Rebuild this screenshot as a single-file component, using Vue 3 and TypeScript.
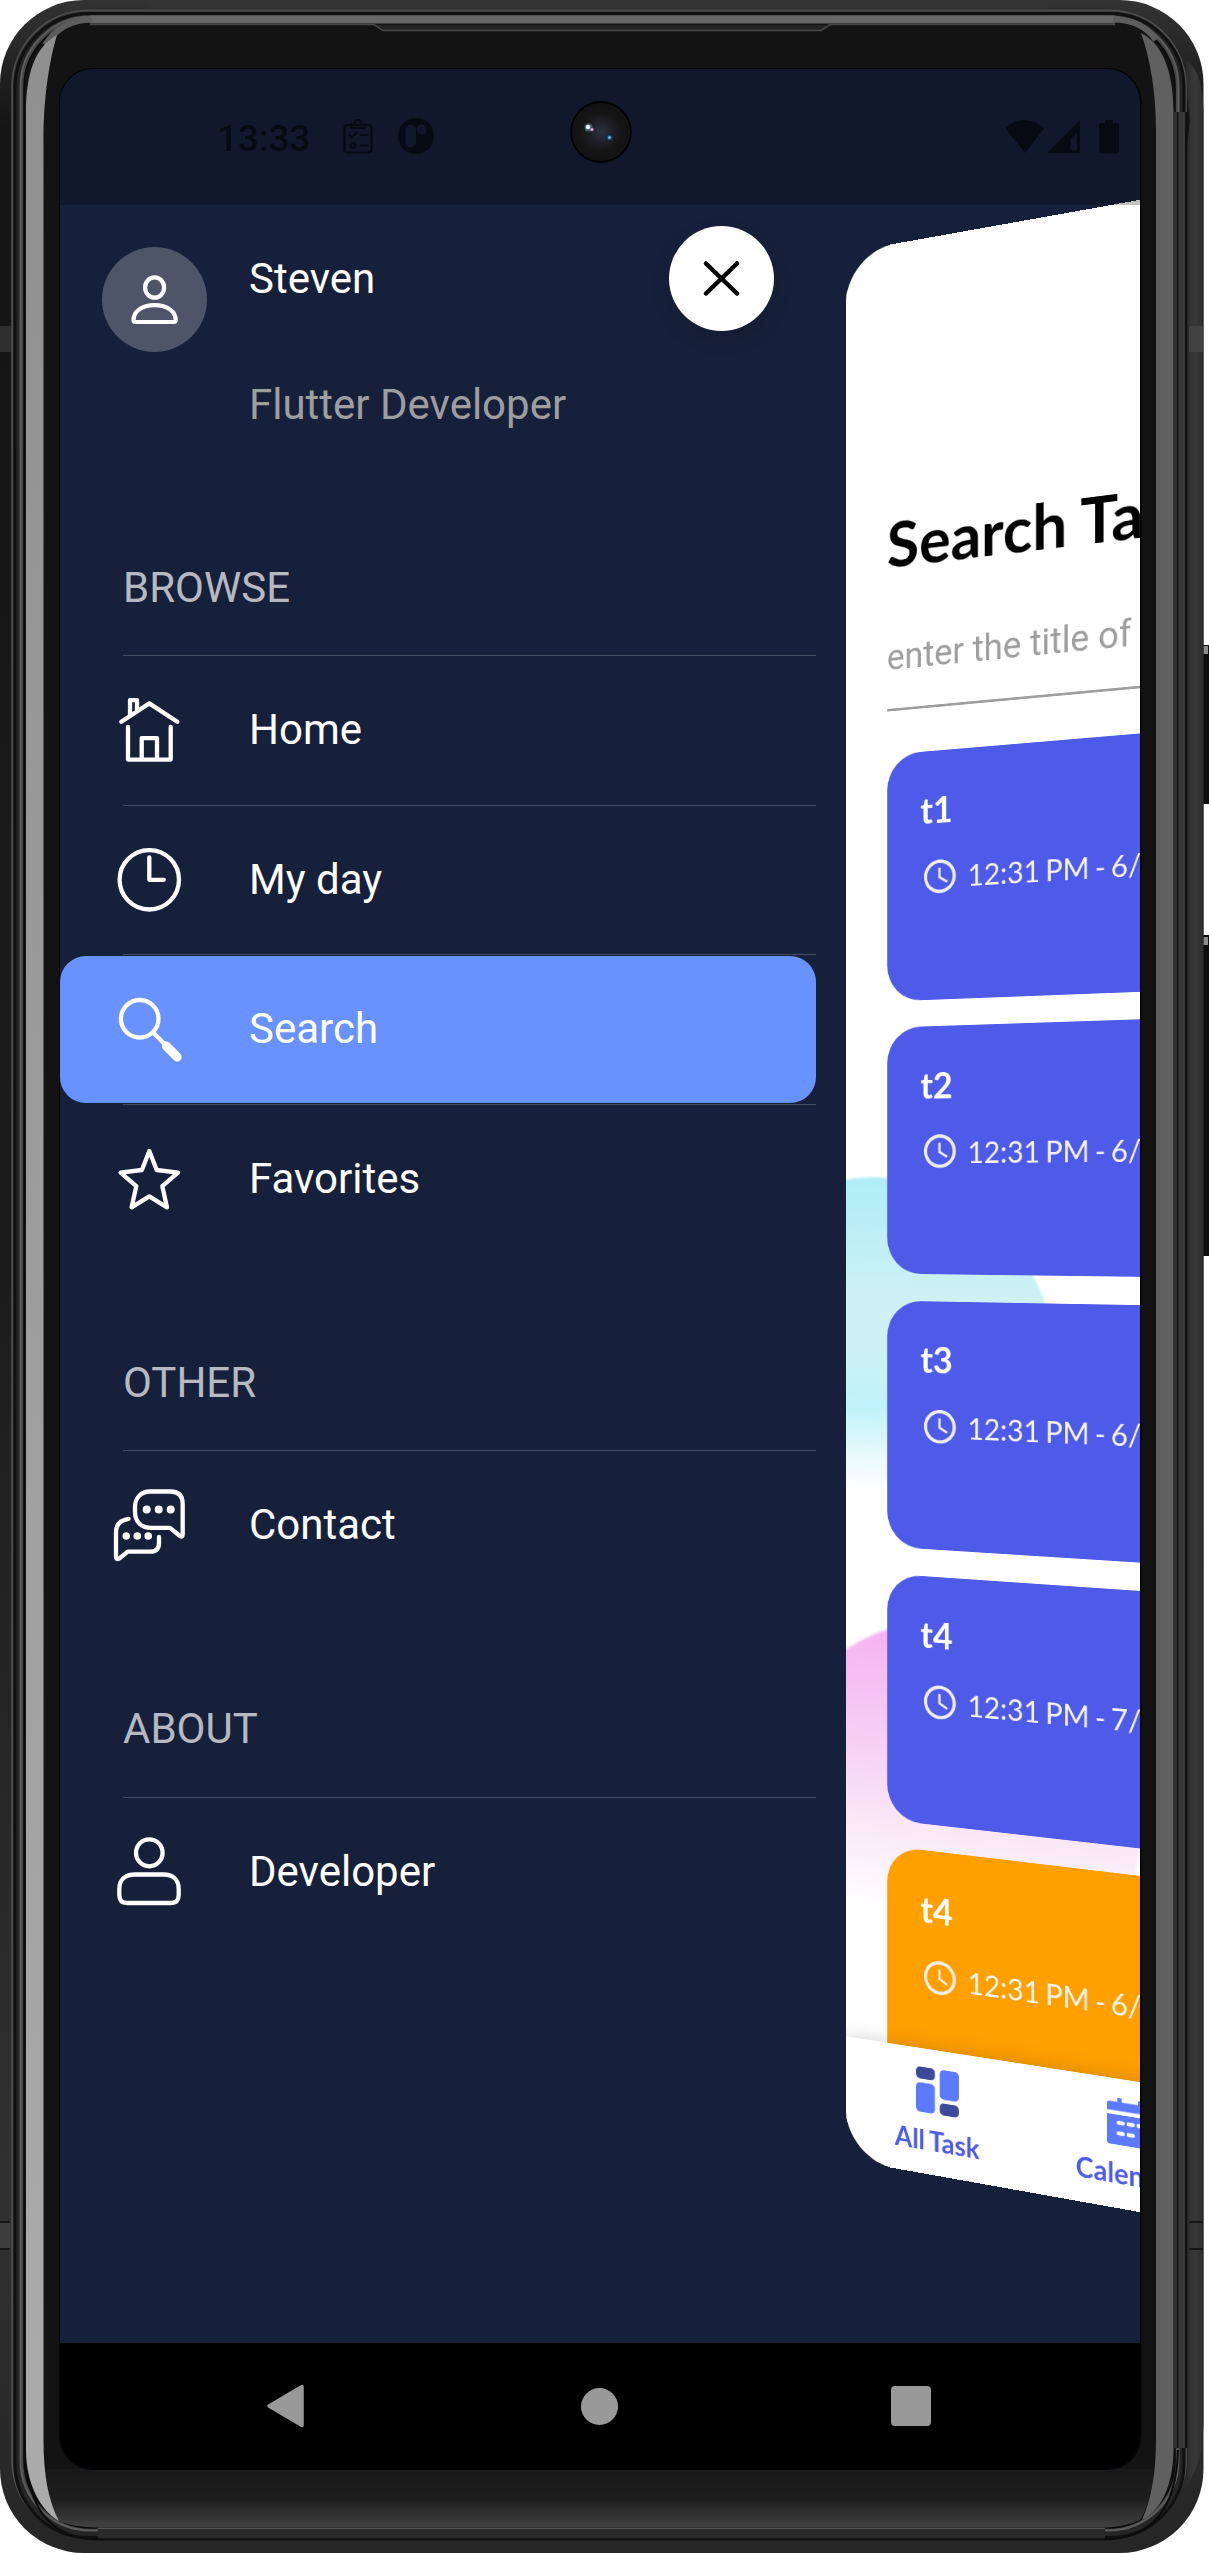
<script setup lang="ts">
interface MenuItem {
  label: string
  icon: 'home' | 'clock' | 'search' | 'star' | 'chat' | 'user'
  active?: boolean
}
interface MenuSection {
  title: string
  items: MenuItem[]
}
interface Task {
  title: string
  time: string
  tone: 'indigo' | 'amber'
}

const sections: MenuSection[] = [
  {
    title: 'BROWSE',
    items: [
      { label: 'Home', icon: 'home' },
      { label: 'My day', icon: 'clock' },
      { label: 'Search', icon: 'search', active: true },
      { label: 'Favorites', icon: 'star' },
    ],
  },
  { title: 'OTHER', items: [{ label: 'Contact', icon: 'chat' }] },
  { title: 'ABOUT', items: [{ label: 'Developer', icon: 'user' }] },
]

const tasks: Task[] = [
  { title: 't1', time: '12:31 PM - 6/', tone: 'indigo' },
  { title: 't2', time: '12:31 PM - 6/', tone: 'indigo' },
  { title: 't3', time: '12:31 PM - 6/', tone: 'indigo' },
  { title: 't4', time: '12:31 PM - 7/', tone: 'indigo' },
  { title: 't4', time: '12:31 PM - 6/', tone: 'amber' },
]
</script>

<template>
  <div class="device">
    <!-- Phone body -->
    <svg class="frame" width="1209" height="2553" viewBox="0 0 1209 2553" aria-hidden="true">
      <defs>
        <linearGradient id="chin" x1="0" y1="2469" x2="0" y2="2528" gradientUnits="userSpaceOnUse">
          <stop offset="0" stop-color="#181818" />
          <stop offset=".5" stop-color="#1d1d1d" />
          <stop offset="1" stop-color="#424242" />
        </linearGradient>
        <linearGradient id="rim" x1="0" y1="0" x2="0" y2="2553" gradientUnits="userSpaceOnUse">
          <stop offset="0" stop-color="#333" />
          <stop offset=".05" stop-color="#141414" />
          <stop offset=".5" stop-color="#1c1c1c" />
          <stop offset=".86" stop-color="#303030" />
          <stop offset="1" stop-color="#262626" />
        </linearGradient>
        <linearGradient id="shineL" x1="0" y1="0" x2="0" y2="2553" gradientUnits="userSpaceOnUse">
          <stop offset="0" stop-color="#8f8f8f" />
          <stop offset="1" stop-color="#acacac" />
        </linearGradient>
        <linearGradient id="rimR" x1="1186" y1="0" x2="1204" y2="0" gradientUnits="userSpaceOnUse">
          <stop offset="0" stop-color="#2b2b2b" />
          <stop offset=".5" stop-color="#393939" />
          <stop offset="1" stop-color="#2c2c2c" />
        </linearGradient>
      </defs>
      <rect x="1196" y="645" width="15" height="159" rx="3" fill="#0e0e0e" />
      <rect x="1203" y="646" width="5" height="8" fill="#8c8c8c" />
      <rect x="1196" y="935" width="15" height="321" rx="3" fill="#0e0e0e" />
      <rect x="1203" y="937" width="5" height="8" fill="#8c8c8c" />
      <rect x="0" y="0" width="1203.5" height="2553" rx="84" fill="url(#rim)" />
      <path d="M1186 90C1194 130 1187 120 1187 160V2420C1187 2440 1190 2460 1184 2490C1198 2470 1203.500 2450 1203.500 2420V110C1203 90 1200 70 1186 60Z" fill="url(#rimR)" />
      <rect x="150" y="0" width="898" height="9" fill="#333" />
      <rect x="0" y="326" width="11" height="26" fill="#2f2f2f" />
      <rect x="1189" y="326" width="14" height="26" fill="#414141" />
      <rect x="0" y="2222" width="10" height="27" fill="#3d3d3d" />
      <path d="M0 2222H10M0 2249H10M1189 2222H1203M1189 2249H1203" stroke="#161616" stroke-width="2" />
      <rect x="12" y="10.500" width="1174" height="2526" rx="76" fill="#303030" stroke="#505050" stroke-width="1.600" />
      <rect x="15" y="13.500" width="1169" height="2524" rx="74" fill="#252525" stroke="#101010" stroke-width="3" />
      <rect x="20.500" y="16.500" width="1158" height="2514" rx="70" fill="#464646" stroke="#5c5c5c" stroke-width="2" />
      <rect x="24" y="20" width="1151" height="2508" rx="67" fill="#131313" stroke="#0a0a0a" stroke-width="1.500" />
      <path d="M1176 112V2448" stroke="#2f2f2f" stroke-width="4" />
      <path d="M1178 112V2448" stroke="#101010" stroke-width="1.500" />
      <path d="M1182 112V2448" stroke="#383838" stroke-width="6.500" />
      <path d="M1186.200 112V2448" stroke="#0d0d0d" stroke-width="2" />
      <path d="M90 19.500H1115" stroke="#676767" stroke-width="8" />
      <path d="M45 45Q62 19.500 92 19.500M1113 19.500Q1142 19.500 1156 40" stroke="#5d5d5d" stroke-width="6" fill="none" />
      <path d="M372 25H832L822 31H384Z" fill="#242424" />
      <path d="M90 24.500H374L383 30.500H821L830 24.500H1115" stroke="#494949" stroke-width="1.500" fill="none" />
      <path d="M43 2440V2469H1156V2440C1156 2474 1151 2503 1140 2520Q1126 2527 1105 2527.500H98Q72 2527 59 2521C48 2503 43 2474 43 2440Z" fill="url(#chin)" />
      <path d="M98 2528.500H1105" stroke="#555" stroke-width="1.500" />
      <path d="M98 2534H1105" stroke="#292929" stroke-width="10" />
      <path d="M26 2440V2450Q27 2539.500 100 2539.500H1102Q1176 2539.500 1178 2450" stroke="#0c0c0c" stroke-width="2" fill="none" />
      <path d="M57 35C35 47 26 74 26 112V2450C26 2485 42 2512 59 2521C48 2500 43.500 2474 43.500 2440V140C43.500 95 50 58 57 35Z" fill="url(#shineL)" />
      <path d="M1141 33C1163 44 1173 72 1173.500 110V2450C1173 2488 1160 2511 1142 2520C1152 2498 1156 2470 1156 2440V130C1156 92 1150 58 1141 33Z" fill="#606060" />
      <rect x="59" y="68" width="1082.500" height="2402" rx="34" fill="#020306" />
    </svg>

    <div class="screen">
      <div class="app">
        <aside class="menu">
          <header class="profile">
            <div class="avatar">
              <svg width="60" height="60" viewBox="0 0 60 60">
                <g fill="none" stroke="#fff" stroke-width="4.200" stroke-linejoin="round">
                  <ellipse cx="29.600" cy="17.500" rx="9.500" ry="10.200" />
                  <path d="M8.500 50Q8.500 52 10.500 52H48.700Q50.700 52 50.700 50C50.700 42 43 35.200 29.600 35.200S8.500 42 8.500 50Z" />
                </g>
              </svg>
            </div>
            <div class="who">
              <div class="name">Steven</div>
              <div class="role">Flutter Developer</div>
            </div>
          </header>

          <section v-for="section in sections" :key="section.title" class="section">
            <h2>{{ section.title }}</h2>
            <template v-for="item in section.items" :key="item.label">
              <div class="divider"></div>
              <div class="tile" :class="{ active: item.active }">
                <svg class="icon" width="90" height="90" viewBox="0 0 90 90">
                  <g fill="none" stroke="#fff" stroke-width="4.300" stroke-linecap="round" stroke-linejoin="round">
                    <template v-if="item.icon === 'home'">
                      <path d="M17.300 36.800L45.300 18.400L73.300 36.800M26 30V15.200H33V26" />
                      <path d="M24 42V74.600H66.700V42M37.700 74.600V53.200H53V74.600" />
                    </template>
                    <template v-else-if="item.icon === 'clock'">
                      <circle cx="45.300" cy="44.800" r="29.700" />
                      <path d="M45.300 22.500V44.800H59.800" />
                    </template>
                    <template v-else-if="item.icon === 'search'">
                      <circle cx="35.700" cy="34.800" r="18.800" />
                      <path d="M49.300 48.400L60 59.500" />
                      <path d="M62.300 62L73.200 73" stroke-width="9" />
                    </template>
                    <path
                      v-else-if="item.icon === 'star'"
                      d="M45.300 17L52.700 36L74 38.700L58.300 52.200L63 73.300L45.300 62.400L27.600 73.300L32.300 52.200L16.600 38.700L37.900 36Z"
                    />
                    <template v-else-if="item.icon === 'chat'">
                      <path d="M46 11.500H66.500Q78.700 11.500 78.700 24V54.500Q78.700 57.500 76 56L66 47.900H47C37 47.900 31 41.500 31 32V27C31 18 37 11.500 46 11.500Z" />
                      <path d="M24.500 38.800C16 40 12 44.500 12 52.500V76.500Q12 80.500 15.300 78.500L23.700 71.700H46Q55 71.700 55 63V57" />
                      <g fill="#fff" stroke="none">
                        <circle cx="42.700" cy="29.500" r="4" /><circle cx="54.700" cy="29.500" r="4" /><circle cx="66.700" cy="29.500" r="4" />
                        <circle cx="22.300" cy="56" r="3.800" /><circle cx="33.300" cy="56" r="3.800" /><circle cx="44.200" cy="56" r="3.800" />
                      </g>
                    </template>
                    <template v-else>
                      <ellipse cx="45.300" cy="25.800" rx="13.300" ry="13.500" />
                      <path d="M31 47.500H59.500C69 47.500 74.700 53 74.700 62V68Q74.700 76 66.700 76H23.300Q15.300 76 15.300 68V62C15.300 53 21 47.500 31 47.500Z" />
                    </template>
                  </g>
                </svg>
                <span>{{ item.label }}</span>
              </div>
            </template>
          </section>
        </aside>

        <!-- Tilted page peeking out from behind the menu -->
        <main class="panel">
          <svg class="blobs" width="1080" height="2127" viewBox="0 0 1080 2127">
            <defs>
              <linearGradient id="cyan" x1="0" y1="1100" x2="0" y2="1540" gradientUnits="userSpaceOnUse">
                <stop offset="0" stop-color="#adedf6" />
                <stop offset=".36" stop-color="#d0f1f4" />
                <stop offset=".46" stop-color="#cdf1f5" />
                <stop offset=".63" stop-color="#bff3f9" />
                <stop offset=".74" stop-color="#e4f8fb" />
                <stop offset=".85" stop-color="#fff" />
              </linearGradient>
              <linearGradient id="pink" x1="0" y1="1620" x2="0" y2="1970" gradientUnits="userSpaceOnUse">
                <stop offset="0" stop-color="#f5aff2" />
                <stop offset=".35" stop-color="#f6c8f3" />
                <stop offset=".78" stop-color="#faedf8" />
                <stop offset="1" stop-color="#fff" />
              </linearGradient>
              <filter id="soft"><feGaussianBlur stdDeviation="1.500" /></filter>
            </defs>
            <circle cx="36" cy="1328" r="225" fill="url(#cyan)" filter="url(#soft)" />
            <circle cx="131" cy="1849" r="225" fill="url(#pink)" filter="url(#soft)" />
          </svg>

          <div class="content">
            <h1>Search Tasks</h1>
            <div class="field">enter the title of</div>
            <article v-for="(task, i) in tasks" :key="i" class="card" :class="task.tone">
              <h3>{{ task.title }}</h3>
              <div class="when">
                <svg width="47.250" height="47.250" viewBox="0 0 24 24" fill="#eee">
                  <path d="M11.990 2C6.470 2 2 6.480 2 12s4.470 10 9.990 10C17.520 22 22 17.520 22 12S17.520 2 11.990 2zM12 20c-4.420 0-8-3.580-8-8s3.580-8 8-8 8 3.580 8 8-3.580 8-8 8z" />
                  <path d="M12.500 7H11v6l5.250 3.150.75-1.230-4.500-2.670z" />
                </svg>
                <span>{{ task.time }}</span>
              </div>
            </article>
          </div>

          <nav class="tabs">
            <div class="tab">
              <svg width="53" height="53" viewBox="0 0 53 53">
                <rect width="23.500" height="14" rx="5" fill="#3d4a9c" />
                <rect y="18.500" width="23.500" height="34.500" rx="5" fill="#5c7aff" />
                <rect x="29.500" width="23.500" height="34.500" rx="5" fill="#5c7aff" />
                <rect x="29.500" y="39" width="23.500" height="14" rx="5" fill="#3d4a9c" />
              </svg>
              <span>All Task</span>
            </div>
            <div class="tab">
              <svg width="53" height="53" viewBox="0 0 53 53" fill="#5c7aff">
                <path d="M3 4.500H12V0H17V4.500H36V0H41V4.500H50Q53 4.500 53 7.500V14.500H0V7.500Q0 4.500 3 4.500Z" />
                <path d="M0 19H53V50Q53 53 50 53H3Q0 53 0 50Z" />
                <path d="M13.500 28H18.500M25 28H30M36.500 28H41.500M13.500 40H18.500M25 40H30" stroke="#fff" stroke-width="4.500" stroke-linecap="round" />
              </svg>
              <span>Calendar</span>
            </div>
          </nav>
        </main>

        <button class="close" aria-label="Close menu">
          <svg width="44" height="44" viewBox="0 0 44 44">
            <path d="M6 6.500L37 36.500M37 6.500L6 36.500" stroke="#000" stroke-width="4.500" stroke-linecap="round" />
          </svg>
        </button>
      </div>

      <footer class="navbar">
        <svg width="40" height="48" viewBox="0 0 40 48"><path d="M36 4.500V43.500L3 24Z" fill="#999" stroke="#999" stroke-width="3.500" stroke-linejoin="round" /></svg>
        <i class="dot"></i>
        <i class="square"></i>
      </footer>

      <div class="status">
        <span class="clock">13:33</span>
        <svg class="notif" width="94" height="40" viewBox="0 0 94 40">
          <g fill="none" stroke="#060a13" stroke-width="2.200" stroke-linejoin="round" stroke-linecap="round">
            <rect x="2.500" y="8" width="27" height="27.500" rx="3" />
            <path d="M9.500 11V7.500H12.500Q13 3 16 3T19.500 7.500H22.500V11Z" />
            <path d="M7.500 18L10 20.500L14.500 15.500M19 18H25.500M19 28.500H25.500" />
            <circle cx="11" cy="28.500" r="2.300" />
          </g>
          <circle cx="74" cy="19" r="18" fill="#060a13" />
          <rect x="63.500" y="8" width="10.500" height="22.500" rx="5" fill="#12182b" />
          <circle cx="79.500" cy="12.500" r="5" fill="#12182b" />
        </svg>
        <svg class="signal" width="116" height="36" viewBox="0 0 116 36" fill="#060a13">
          <path d="M20 34L.500 9.500C11 -1.500 29 -1.500 39 9.500Z" />
          <path fill-rule="evenodd" d="M75 1V34H42ZM72 13L65.500 20V31H72Z" />
          <path d="M100 1H108V4H112Q114 4 114 6V32Q114 34.500 112 34.500H96Q94 34.500 94 32V6Q94 4 96 4H100Z" />
        </svg>
      </div>
      <svg class="lens" width="62" height="62" viewBox="0 0 62 62">
        <defs>
          <radialGradient id="glass">
            <stop offset="0" stop-color="#2c3040" />
            <stop offset=".45" stop-color="#1c1c24" />
            <stop offset=".65" stop-color="#151515" />
            <stop offset="1" stop-color="#121212" />
          </radialGradient>
        </defs>
        <circle cx="31" cy="31" r="30" fill="url(#glass)" stroke="#020202" stroke-width="1.800" />
        <circle cx="18.500" cy="26.500" r="4" fill="#6f9290" opacity=".55" />
        <circle cx="18" cy="26" r="2.200" fill="#eaf6ff" />
        <circle cx="22" cy="28.500" r="1.600" fill="#d7a9dc" />
        <circle cx="39.500" cy="36.500" r="2.600" fill="#1d4e7c" />
        <circle cx="39.500" cy="36.500" r="1.300" fill="#7cc4ff" />
      </svg>
    </div>
  </div>
</template>

<style>
body {
  margin: 0;
  background: #fff;
}
</style>

<style scoped>
.device {
  position: relative;
  box-sizing: border-box;
  width: 1209px;
  height: 2553px;
  padding: 69px 69px 84px 60px;
  overflow: hidden;
  font-family: Roboto, sans-serif;
}
.frame {
  position: absolute;
  inset: 0;
}
.screen {
  position: relative;
  display: flex;
  flex-direction: column;
  width: 1080px;
  height: 2400px;
  border-radius: 33px;
  overflow: hidden;
  background: #17203a;
}
.app {
  position: relative;
  height: 2274px;
  overflow: hidden;
}

/* side menu */
.menu {
  width: 756px;
  padding-top: 178px;
  color: #fff;
  font-size: 42px;
  line-height: 48px;
}
.profile {
  display: flex;
  gap: 42px;
  height: 210.500px;
  padding-left: 42px;
}
.avatar {
  display: flex;
  align-items: center;
  justify-content: center;
  width: 105px;
  height: 105px;
  border-radius: 50%;
  background: rgba(255, 255, 255, 0.24);
}
.who {
  padding-top: 8.400px;
}
.role {
  margin-top: 77.300px;
  color: #9e9e9e;
}
.section {
  padding-top: 106.200px;
}
h2 {
  margin: 0 0 42.500px 63px;
  color: rgba(255, 255, 255, 0.7);
  font-size: 42px;
  font-weight: 400;
}
.divider {
  height: 2.600px;
  margin-left: 63px;
  background: linear-gradient(transparent 0.600px, rgba(255, 255, 255, 0.2) 0.600px, rgba(255, 255, 255, 0.2) 2px, transparent 2px);
}
.tile {
  display: flex;
  align-items: center;
  gap: 55px;
  height: 147px;
  padding-left: 44px;
  border-radius: 26px;
}
.tile.active {
  background: #6792ff;
}
.close {
  position: absolute;
  top: 157px;
  left: 609px;
  display: flex;
  align-items: center;
  justify-content: center;
  width: 105px;
  height: 105px;
  padding: 0;
  border: 0;
  border-radius: 50%;
  background: #fff;
  box-shadow: 0 8px 20px rgba(0, 0, 0, 0.12);
}

/* page behind, scaled, shifted and turned around the vertical axis */
.panel {
  position: absolute;
  inset: 0;
  display: flex;
  flex-direction: column;
  overflow: hidden;
  border-radius: 63px;
  background: #fff;
  font-family: Lato, sans-serif;
  transform: perspective(2625px) rotateY(-27.296deg) translateX(695.600px) scale(0.8);
}
.blobs {
  position: absolute;
  top: 0;
  left: 0;
}
.content {
  position: relative;
  flex: none;
  box-sizing: border-box;
  height: 2127px;
  padding: 309px 52.500px 0;
  overflow: hidden;
}
h1 {
  margin: 0;
  font-size: 73.500px;
  line-height: 90px;
  color: #000;
}
.field {
  box-sizing: border-box;
  height: 93.500px;
  margin: 59.800px 0 51px;
  border-bottom: 3px solid #9e9e9e;
  color: #9e9e9e;
  font: 42px/60px Roboto, sans-serif;
}
.card {
  box-sizing: border-box;
  height: 291.300px;
  margin-bottom: 31.500px;
  padding: 43.500px 42px 0;
  border-radius: 42px;
  color: #fff;
}
.indigo {
  background: #4e5ae8;
}
.amber {
  background: #ffa000;
}
h3 {
  margin: 0 0 29.500px;
  font-size: 42px;
  line-height: 50px;
}
.when {
  display: flex;
  align-items: center;
  gap: 11px;
  height: 48px;
  color: #f5f5f5;
  font-size: 34.100px;
  word-spacing: -2.600px;
}
.tabs {
  position: relative;
  display: flex;
  flex: none;
  height: 147px;
  background: #fff;
  box-shadow: 0 0 22px rgba(0, 0, 0, 0.18);
}
.tab {
  display: flex;
  flex-direction: column;
  align-items: center;
  gap: 13px;
  width: 230px;
  padding-top: 22px;
  color: #4e5ae8;
  font-size: 31.500px;
  font-weight: 700;
  line-height: 38px;
  word-spacing: -1.500px;
}

/* system bars */
.status {
  position: absolute;
  inset: 0 0 auto;
  display: flex;
  align-items: center;
  box-sizing: border-box;
  height: 136px;
  padding: 0 19px 0 157px;
  background: rgba(0, 0, 0, 0.25);
}
.clock {
  color: #060a13;
  font-size: 36.750px;
  font-weight: 500;
  width: 125px;
  padding-top: 2px;
}
.signal {
  margin-left: auto;
}
.lens {
  position: absolute;
  top: 32px;
  left: 509.500px;
}
.navbar {
  display: flex;
  align-items: center;
  box-sizing: border-box;
  height: 126px;
  padding-left: 206px;
  background: #000;
}
.dot {
  width: 37px;
  height: 37px;
  margin-left: 275px;
  border-radius: 50%;
  background: #999;
}
.square {
  width: 40px;
  height: 40px;
  margin-left: 273px;
  border-radius: 4px;
  background: #999;
}
</style>
